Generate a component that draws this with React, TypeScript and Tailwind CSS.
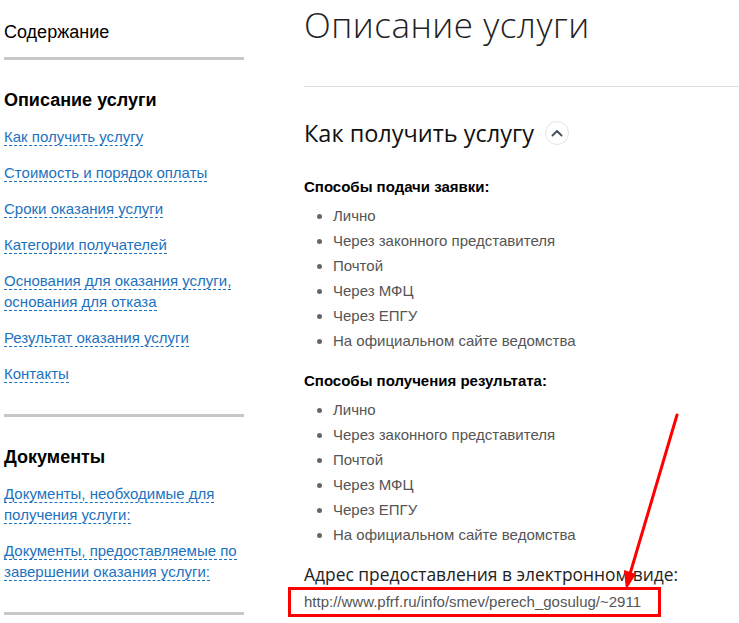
import React from 'react';

const linkColor = 'text-[#1d72c0]';

function SideLink({ children }: { children: React.ReactNode }) {
  return (
    <li className="text-[15px] leading-[21px]">
      <a href="#" className={`${linkColor} border-b border-dashed border-[#1d72c0]`}>
        {children}
      </a>
    </li>
  );
}

function Bullets({ items }: { items: string[] }) {
  return (
    <ul className="mt-[6px] pl-[29px] list-disc marker:text-[#666] text-[15px] leading-[25px] text-[#555]">
      {items.map((t) => (
        <li key={t}>{t}</li>
      ))}
    </ul>
  );
}

const ways = [
  'Лично',
  'Через законного представителя',
  'Почтой',
  'Через МФЦ',
  'Через ЕПГУ',
  'На официальном сайте ведомства',
];

export default function App() {
  return (
    <div className="relative w-[739px] h-[623px] overflow-hidden bg-white font-['Liberation_Sans',Arial,sans-serif] text-black">
      <div className="flex">
        {/* sidebar */}
        <aside className="w-[240px] ml-[4px] shrink-0 pt-[20px]">
          <div className="text-[18px] leading-[24px]">Содержание</div>
          <div className="mt-[13px] h-[3px] bg-[#c8c8ca]" />

          <h3 className="mt-[28px] text-[18px] leading-[24px] font-bold">Описание услуги</h3>
          <ul className="mt-[14px] flex flex-col gap-[15px]">
            <SideLink>Как получить услугу</SideLink>
            <SideLink>Стоимость и порядок оплаты</SideLink>
            <SideLink>Сроки оказания услуги</SideLink>
            <SideLink>Категории получателей</SideLink>
            <SideLink>Основания для оказания услуги, основания для отказа</SideLink>
            <SideLink>Результат оказания услуги</SideLink>
            <SideLink>Контакты</SideLink>
          </ul>
          <div className="mt-[30px] h-[3px] bg-[#c8c8ca]" />

          <h3 className="mt-[28px] text-[18px] leading-[24px] font-bold">Документы</h3>
          <ul className="mt-[14px] flex flex-col gap-[15px]">
            <SideLink>Документы, необходимые для получения услуги:</SideLink>
            <SideLink>Документы, предоставляемые по завершении оказания услуги:</SideLink>
          </ul>
          <div className="mt-[30px] h-[3px] bg-[#c8c8ca]" />
        </aside>

        {/* main */}
        <main className="flex-1 ml-[60px]">
          <h1 className="font-['Open_Sans',sans-serif] font-light text-[35px] leading-[50px] text-[#222] tracking-[0.5px]">
            Описание услуги
          </h1>
          <div className="mt-[36px] h-px bg-[#e0e0e0]" />

          <div className="mt-[30px] flex items-center gap-[11px]">
            <h2 className="font-['Open_Sans',sans-serif] text-[23.5px] leading-[32px] text-[#111]">
              Как получить услугу
            </h2>
            <button className="w-[24px] h-[24px] rounded-full border border-[#e1e4e8] flex items-center justify-center">
              <svg width="12" height="8" viewBox="0 0 12 8" fill="none">
                <path d="M1.5 6.5 L6 2 L10.5 6.5" stroke="#4a5561" strokeWidth="2" strokeLinecap="round" strokeLinejoin="round" />
              </svg>
            </button>
          </div>

          <h4 className="mt-[28px] text-[15px] leading-[20px] font-bold">Способы подачи заявки:</h4>
          <Bullets items={ways} />

          <h4 className="mt-[18px] text-[15px] leading-[20px] font-bold">Способы получения результата:</h4>
          <Bullets items={ways} />

          <div className="mt-[15px] font-['Open_Sans',sans-serif] text-[17.4px] leading-[24px] text-[#222]">
            Адрес предоставления в электронном виде:
          </div>
          <div className="mt-[1px] ml-[-16px] inline-block border-[3px] border-[#f00] pl-[13px] pr-[17px] text-[15px] leading-[24px] text-[#555]">
            http://www.pfrf.ru/info/smev/perech_gosulug/~2911
          </div>
        </main>
      </div>

      {/* red arrow annotation */}
      <svg className="absolute left-0 top-0 pointer-events-none" width="739" height="623">
        <line x1="677" y1="415" x2="630" y2="574" stroke="#f00" strokeWidth="3" strokeLinecap="round" />
        <polygon points="624,570 636,574 626,590" fill="#f00" />
      </svg>
    </div>
  );
}
